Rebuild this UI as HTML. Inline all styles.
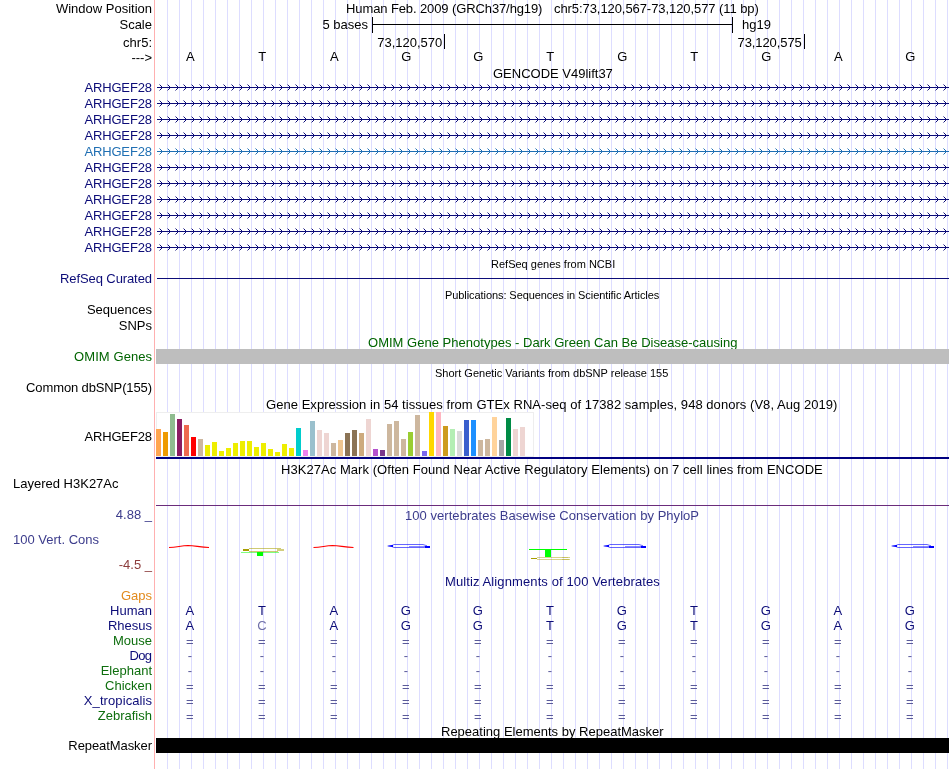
<!DOCTYPE html>
<html><head><meta charset="utf-8"><style>
html,body{margin:0;padding:0;background:#fff;overflow:hidden;width:950px;height:769px}
svg{display:block;will-change:transform;font-family:"Liberation Sans",sans-serif}
</style></head><body>
<svg width="950" height="769" viewBox="0 0 950 769" shape-rendering="crispEdges">
<defs><pattern id="chev0" x="159" y="84" width="8" height="16" patternUnits="userSpaceOnUse"><rect x="0" y="0" width="1" height="1" fill="#8A8ABE"/><rect x="1" y="1" width="1" height="1" fill="#0C0C78"/><rect x="2" y="2" width="1" height="3" fill="#0C0C78"/><rect x="1" y="5" width="1" height="1" fill="#0C0C78"/><rect x="0" y="6" width="1" height="1" fill="#8A8ABE"/></pattern><pattern id="chev1" x="159" y="84" width="8" height="16" patternUnits="userSpaceOnUse"><rect x="0" y="0" width="1" height="1" fill="#8FB7D9"/><rect x="1" y="1" width="1" height="1" fill="#1F6FB3"/><rect x="2" y="2" width="1" height="3" fill="#1F6FB3"/><rect x="1" y="5" width="1" height="1" fill="#1F6FB3"/><rect x="0" y="6" width="1" height="1" fill="#8FB7D9"/></pattern></defs>
<rect x="167" y="0" width="1" height="769" fill="#DDDDFF"/>
<rect x="179" y="0" width="1" height="769" fill="#DDDDFF"/>
<rect x="191" y="0" width="1" height="769" fill="#DDDDFF"/>
<rect x="203" y="0" width="1" height="769" fill="#DDDDFF"/>
<rect x="215" y="0" width="1" height="769" fill="#DDDDFF"/>
<rect x="227" y="0" width="1" height="769" fill="#DDDDFF"/>
<rect x="239" y="0" width="1" height="769" fill="#DDDDFF"/>
<rect x="251" y="0" width="1" height="769" fill="#DDDDFF"/>
<rect x="263" y="0" width="1" height="769" fill="#DDDDFF"/>
<rect x="275" y="0" width="1" height="769" fill="#DDDDFF"/>
<rect x="287" y="0" width="1" height="769" fill="#DDDDFF"/>
<rect x="299" y="0" width="1" height="769" fill="#DDDDFF"/>
<rect x="311" y="0" width="1" height="769" fill="#DDDDFF"/>
<rect x="323" y="0" width="1" height="769" fill="#DDDDFF"/>
<rect x="335" y="0" width="1" height="769" fill="#DDDDFF"/>
<rect x="347" y="0" width="1" height="769" fill="#DDDDFF"/>
<rect x="359" y="0" width="1" height="769" fill="#DDDDFF"/>
<rect x="371" y="0" width="1" height="769" fill="#DDDDFF"/>
<rect x="383" y="0" width="1" height="769" fill="#DDDDFF"/>
<rect x="395" y="0" width="1" height="769" fill="#DDDDFF"/>
<rect x="407" y="0" width="1" height="769" fill="#DDDDFF"/>
<rect x="419" y="0" width="1" height="769" fill="#DDDDFF"/>
<rect x="431" y="0" width="1" height="769" fill="#DDDDFF"/>
<rect x="443" y="0" width="1" height="769" fill="#DDDDFF"/>
<rect x="455" y="0" width="1" height="769" fill="#DDDDFF"/>
<rect x="467" y="0" width="1" height="769" fill="#DDDDFF"/>
<rect x="479" y="0" width="1" height="769" fill="#DDDDFF"/>
<rect x="491" y="0" width="1" height="769" fill="#DDDDFF"/>
<rect x="503" y="0" width="1" height="769" fill="#DDDDFF"/>
<rect x="515" y="0" width="1" height="769" fill="#DDDDFF"/>
<rect x="527" y="0" width="1" height="769" fill="#DDDDFF"/>
<rect x="539" y="0" width="1" height="769" fill="#DDDDFF"/>
<rect x="551" y="0" width="1" height="769" fill="#DDDDFF"/>
<rect x="563" y="0" width="1" height="769" fill="#DDDDFF"/>
<rect x="575" y="0" width="1" height="769" fill="#DDDDFF"/>
<rect x="587" y="0" width="1" height="769" fill="#DDDDFF"/>
<rect x="599" y="0" width="1" height="769" fill="#DDDDFF"/>
<rect x="611" y="0" width="1" height="769" fill="#DDDDFF"/>
<rect x="623" y="0" width="1" height="769" fill="#DDDDFF"/>
<rect x="635" y="0" width="1" height="769" fill="#DDDDFF"/>
<rect x="647" y="0" width="1" height="769" fill="#DDDDFF"/>
<rect x="659" y="0" width="1" height="769" fill="#DDDDFF"/>
<rect x="671" y="0" width="1" height="769" fill="#DDDDFF"/>
<rect x="683" y="0" width="1" height="769" fill="#DDDDFF"/>
<rect x="695" y="0" width="1" height="769" fill="#DDDDFF"/>
<rect x="707" y="0" width="1" height="769" fill="#DDDDFF"/>
<rect x="719" y="0" width="1" height="769" fill="#DDDDFF"/>
<rect x="731" y="0" width="1" height="769" fill="#DDDDFF"/>
<rect x="743" y="0" width="1" height="769" fill="#DDDDFF"/>
<rect x="755" y="0" width="1" height="769" fill="#DDDDFF"/>
<rect x="767" y="0" width="1" height="769" fill="#DDDDFF"/>
<rect x="779" y="0" width="1" height="769" fill="#DDDDFF"/>
<rect x="791" y="0" width="1" height="769" fill="#DDDDFF"/>
<rect x="803" y="0" width="1" height="769" fill="#DDDDFF"/>
<rect x="815" y="0" width="1" height="769" fill="#DDDDFF"/>
<rect x="827" y="0" width="1" height="769" fill="#DDDDFF"/>
<rect x="839" y="0" width="1" height="769" fill="#DDDDFF"/>
<rect x="851" y="0" width="1" height="769" fill="#DDDDFF"/>
<rect x="863" y="0" width="1" height="769" fill="#DDDDFF"/>
<rect x="875" y="0" width="1" height="769" fill="#DDDDFF"/>
<rect x="887" y="0" width="1" height="769" fill="#DDDDFF"/>
<rect x="899" y="0" width="1" height="769" fill="#DDDDFF"/>
<rect x="911" y="0" width="1" height="769" fill="#DDDDFF"/>
<rect x="923" y="0" width="1" height="769" fill="#DDDDFF"/>
<rect x="935" y="0" width="1" height="769" fill="#DDDDFF"/>
<rect x="947" y="0" width="1" height="769" fill="#DDDDFF"/>
<rect x="154" y="0" width="1" height="769" fill="#FFB0B0"/>
<text x="152" y="13" text-anchor="end" fill="#000" font-size="13">Window Position</text>
<text x="152" y="29" text-anchor="end" fill="#000" font-size="13">Scale</text>
<text x="152" y="47" text-anchor="end" fill="#000" font-size="13">chr5:</text>
<text x="152" y="62" text-anchor="end" fill="#000" font-size="13">---&gt;</text>
<text x="346" y="13" fill="#000" font-size="13" textLength="196.45" lengthAdjust="spacing">Human Feb. 2009 (GRCh37/hg19)</text>
<text x="554" y="13" fill="#000" font-size="13" textLength="204.80" lengthAdjust="spacing">chr5:73,120,567-73,120,577 (11 bp)</text>
<rect x="372" y="17" width="1" height="16" fill="#000"/>
<rect x="732" y="17" width="1" height="16" fill="#000"/>
<rect x="372" y="24" width="361" height="1" fill="#000"/>
<text x="368" y="29" text-anchor="end" fill="#000" font-size="13">5 bases</text>
<text x="742" y="29" text-anchor="start" fill="#000" font-size="13">hg19</text>
<rect x="444" y="34" width="1" height="15" fill="#000"/>
<rect x="804" y="34" width="1" height="15" fill="#000"/>
<text x="442.3" y="47" text-anchor="end" fill="#000" font-size="13">73,120,570</text>
<text x="801.8" y="47" text-anchor="end" fill="#000" font-size="13" textLength="64.3" lengthAdjust="spacing">73,120,575</text>
<text x="190.3" y="61" text-anchor="middle" fill="#000" font-size="13">A</text>
<text x="262.3" y="61" text-anchor="middle" fill="#000" font-size="13">T</text>
<text x="334.3" y="61" text-anchor="middle" fill="#000" font-size="13">A</text>
<text x="406.3" y="61" text-anchor="middle" fill="#000" font-size="13">G</text>
<text x="478.3" y="61" text-anchor="middle" fill="#000" font-size="13">G</text>
<text x="550.3" y="61" text-anchor="middle" fill="#000" font-size="13">T</text>
<text x="622.3" y="61" text-anchor="middle" fill="#000" font-size="13">G</text>
<text x="694.3" y="61" text-anchor="middle" fill="#000" font-size="13">T</text>
<text x="766.3" y="61" text-anchor="middle" fill="#000" font-size="13">G</text>
<text x="838.3" y="61" text-anchor="middle" fill="#000" font-size="13">A</text>
<text x="910.3" y="61" text-anchor="middle" fill="#000" font-size="13">G</text>
<text x="493" y="78" fill="#000" font-size="13" textLength="119.84" lengthAdjust="spacing">GENCODE V49lift37</text>
<text x="152" y="92" text-anchor="end" fill="#0C0C78" font-size="13" textLength="67.59" lengthAdjust="spacing">ARHGEF28</text>
<rect x="157" y="87" width="792" height="1" fill="#0C0C78"/>
<rect x="159" y="84" width="790" height="7" fill="url(#chev0)"/>
<text x="152" y="108" text-anchor="end" fill="#0C0C78" font-size="13" textLength="67.59" lengthAdjust="spacing">ARHGEF28</text>
<rect x="157" y="103" width="792" height="1" fill="#0C0C78"/>
<rect x="159" y="100" width="790" height="7" fill="url(#chev0)"/>
<text x="152" y="124" text-anchor="end" fill="#0C0C78" font-size="13" textLength="67.59" lengthAdjust="spacing">ARHGEF28</text>
<rect x="157" y="119" width="792" height="1" fill="#0C0C78"/>
<rect x="159" y="116" width="790" height="7" fill="url(#chev0)"/>
<text x="152" y="140" text-anchor="end" fill="#0C0C78" font-size="13" textLength="67.59" lengthAdjust="spacing">ARHGEF28</text>
<rect x="157" y="135" width="792" height="1" fill="#0C0C78"/>
<rect x="159" y="132" width="790" height="7" fill="url(#chev0)"/>
<text x="152" y="156" text-anchor="end" fill="#1F6FB3" font-size="13" textLength="67.59" lengthAdjust="spacing">ARHGEF28</text>
<rect x="157" y="151" width="792" height="1" fill="#1F6FB3"/>
<rect x="159" y="148" width="790" height="7" fill="url(#chev1)"/>
<text x="152" y="172" text-anchor="end" fill="#0C0C78" font-size="13" textLength="67.59" lengthAdjust="spacing">ARHGEF28</text>
<rect x="157" y="167" width="792" height="1" fill="#0C0C78"/>
<rect x="159" y="164" width="790" height="7" fill="url(#chev0)"/>
<text x="152" y="188" text-anchor="end" fill="#0C0C78" font-size="13" textLength="67.59" lengthAdjust="spacing">ARHGEF28</text>
<rect x="157" y="183" width="792" height="1" fill="#0C0C78"/>
<rect x="159" y="180" width="790" height="7" fill="url(#chev0)"/>
<text x="152" y="204" text-anchor="end" fill="#0C0C78" font-size="13" textLength="67.59" lengthAdjust="spacing">ARHGEF28</text>
<rect x="157" y="199" width="792" height="1" fill="#0C0C78"/>
<rect x="159" y="196" width="790" height="7" fill="url(#chev0)"/>
<text x="152" y="220" text-anchor="end" fill="#0C0C78" font-size="13" textLength="67.59" lengthAdjust="spacing">ARHGEF28</text>
<rect x="157" y="215" width="792" height="1" fill="#0C0C78"/>
<rect x="159" y="212" width="790" height="7" fill="url(#chev0)"/>
<text x="152" y="236" text-anchor="end" fill="#0C0C78" font-size="13" textLength="67.59" lengthAdjust="spacing">ARHGEF28</text>
<rect x="157" y="231" width="792" height="1" fill="#0C0C78"/>
<rect x="159" y="228" width="790" height="7" fill="url(#chev0)"/>
<text x="152" y="252" text-anchor="end" fill="#0C0C78" font-size="13" textLength="67.59" lengthAdjust="spacing">ARHGEF28</text>
<rect x="157" y="247" width="792" height="1" fill="#0C0C78"/>
<rect x="159" y="244" width="790" height="7" fill="url(#chev0)"/>
<text x="491" y="268" fill="#000" font-size="11" textLength="124.22" lengthAdjust="spacing">RefSeq genes from NCBI</text>
<text x="152" y="283" text-anchor="end" fill="#0C0C78" font-size="13" textLength="91.93" lengthAdjust="spacing">RefSeq Curated</text>
<rect x="157" y="278" width="792" height="1" fill="#0C0C78"/>
<text x="445" y="299" fill="#000" font-size="11" textLength="214.27" lengthAdjust="spacing">Publications: Sequences in Scientific Articles</text>
<text x="152" y="314" text-anchor="end" fill="#000" font-size="13">Sequences</text>
<text x="152" y="330" text-anchor="end" fill="#000" font-size="13">SNPs</text>
<text x="368" y="347" fill="#006400" font-size="13" textLength="369.42" lengthAdjust="spacing">OMIM Gene Phenotypes - Dark Green Can Be Disease-causing</text>
<text x="152" y="361" text-anchor="end" fill="#006400" font-size="13" textLength="77.90" lengthAdjust="spacing">OMIM Genes</text>
<rect x="156" y="349" width="793" height="15" fill="#BEBEBE"/>
<text x="435" y="377" fill="#000" font-size="11" textLength="233.27" lengthAdjust="spacing">Short Genetic Variants from dbSNP release 155</text>
<text x="152" y="392" text-anchor="end" fill="#000" font-size="13" textLength="125.89" lengthAdjust="spacing">Common dbSNP(155)</text>
<text x="266" y="409" fill="#000" font-size="13" textLength="571.35" lengthAdjust="spacing">Gene Expression in 54 tissues from GTEx RNA-seq of 17382 samples, 948 donors (V8, Aug 2019)</text>
<text x="152" y="441" text-anchor="end" fill="#000" font-size="13" textLength="67.59" lengthAdjust="spacing">ARHGEF28</text>
<rect x="156.5" y="412.5" width="377" height="44" fill="#fff" stroke="#EEEEEE" stroke-width="1"/>
<rect x="156" y="429" width="5" height="27" fill="#FFA54F"/>
<rect x="163" y="432" width="5" height="24" fill="#EE9A00"/>
<rect x="170" y="414" width="5" height="42" fill="#8FBC8F"/>
<rect x="177" y="419" width="5" height="37" fill="#8B1C62"/>
<rect x="184" y="425" width="5" height="31" fill="#EE6A50"/>
<rect x="191" y="437" width="5" height="19" fill="#FF0000"/>
<rect x="198" y="439" width="5" height="17" fill="#CDB79E"/>
<rect x="205" y="445" width="5" height="11" fill="#EEEE00"/>
<rect x="212" y="442" width="5" height="14" fill="#EEEE00"/>
<rect x="219" y="451" width="5" height="5" fill="#EEEE00"/>
<rect x="226" y="448" width="5" height="8" fill="#EEEE00"/>
<rect x="233" y="443" width="5" height="13" fill="#EEEE00"/>
<rect x="240" y="441" width="5" height="15" fill="#EEEE00"/>
<rect x="247" y="441" width="5" height="15" fill="#EEEE00"/>
<rect x="254" y="447" width="5" height="9" fill="#EEEE00"/>
<rect x="261" y="443" width="5" height="13" fill="#EEEE00"/>
<rect x="268" y="449" width="5" height="7" fill="#EEEE00"/>
<rect x="275" y="452" width="5" height="4" fill="#EEEE00"/>
<rect x="282" y="444" width="5" height="12" fill="#EEEE00"/>
<rect x="289" y="448" width="5" height="8" fill="#EEEE00"/>
<rect x="296" y="428" width="5" height="28" fill="#00CDCD"/>
<rect x="303" y="450" width="5" height="6" fill="#EE82EE"/>
<rect x="310" y="421" width="5" height="35" fill="#9AC0CD"/>
<rect x="317" y="430" width="5" height="26" fill="#EED5D2"/>
<rect x="324" y="433" width="5" height="23" fill="#EED5D2"/>
<rect x="331" y="443" width="5" height="13" fill="#CDB79E"/>
<rect x="338" y="440" width="5" height="16" fill="#EEC591"/>
<rect x="345" y="433" width="5" height="23" fill="#8B7355"/>
<rect x="352" y="430" width="5" height="26" fill="#8B7355"/>
<rect x="359" y="433" width="5" height="23" fill="#CDAA7D"/>
<rect x="366" y="419" width="5" height="37" fill="#EED5D2"/>
<rect x="373" y="449" width="5" height="7" fill="#B452CD"/>
<rect x="380" y="450" width="5" height="6" fill="#7A378B"/>
<rect x="387" y="424" width="5" height="32" fill="#CDB79E"/>
<rect x="394" y="421" width="5" height="35" fill="#CDB79E"/>
<rect x="401" y="439" width="5" height="17" fill="#CDB79E"/>
<rect x="408" y="432" width="5" height="24" fill="#9ACD32"/>
<rect x="415" y="415" width="5" height="41" fill="#CDB79E"/>
<rect x="422" y="451" width="5" height="5" fill="#7A67EE"/>
<rect x="429" y="412" width="5" height="44" fill="#FFD700"/>
<rect x="436" y="412" width="5" height="44" fill="#FFB6C1"/>
<rect x="443" y="426" width="5" height="30" fill="#CD9B1D"/>
<rect x="450" y="429" width="5" height="27" fill="#B4EEB4"/>
<rect x="457" y="431" width="5" height="25" fill="#D9D9D9"/>
<rect x="464" y="420" width="5" height="36" fill="#3A5FCD"/>
<rect x="471" y="420" width="5" height="36" fill="#1E90FF"/>
<rect x="478" y="440" width="5" height="16" fill="#CDB79E"/>
<rect x="485" y="439" width="5" height="17" fill="#CDB79E"/>
<rect x="492" y="417" width="5" height="39" fill="#FFD39B"/>
<rect x="499" y="440" width="5" height="16" fill="#A6A6A6"/>
<rect x="506" y="418" width="5" height="38" fill="#008B45"/>
<rect x="513" y="429" width="5" height="27" fill="#EED5D2"/>
<rect x="520" y="427" width="5" height="29" fill="#EED5D2"/>
<rect x="156" y="457" width="793" height="2" fill="#000080"/>
<text x="281" y="474" fill="#000" font-size="13" textLength="541.75" lengthAdjust="spacing">H3K27Ac Mark (Often Found Near Active Regulatory Elements) on 7 cell lines from ENCODE</text>
<text x="13" y="488" text-anchor="start" fill="#000" font-size="13">Layered H3K27Ac</text>
<rect x="156" y="505" width="793" height="1" fill="#6B2C7B"/>
<text x="405" y="520" fill="#3C3C8C" font-size="13" textLength="294.04" lengthAdjust="spacing">100 vertebrates Basewise Conservation by PhyloP</text>
<text x="152" y="519" text-anchor="end" fill="#3C3C8C" font-size="13">4.88 _</text>
<text x="13" y="544" text-anchor="start" fill="#3C3C8C" font-size="13">100 Vert. Cons</text>
<text x="152" y="569" text-anchor="end" fill="#8C3C3C" font-size="13">-4.5 _</text>
<path d="M169,547.5 C177,547.3 181,545.6 188,545.5 C195,545.6 200,547.3 209,547.5" stroke="#FF0000" stroke-width="1.1" fill="none" shape-rendering="geometricPrecision"/>
<path d="M313.5,547.5 C321.5,547.3 325.5,545.6 332.5,545.5 C339.5,545.6 344.5,547.3 353.5,547.5" stroke="#FF0000" stroke-width="1.1" fill="none" shape-rendering="geometricPrecision"/>
<path d="M387,546 C389,545.2 392,545 393,545 L393,547 C392,547 389,546.8 387,546 Z" fill="#0000FF" shape-rendering="geometricPrecision"/>
<path d="M392,545.5 L394,544.5 L423,544.5 L427,545.8" stroke="#0000FF" stroke-opacity="0.6" stroke-width="1" fill="none" shape-rendering="geometricPrecision"/>
<path d="M392,546.6 L394,547.5 L424,547.5" stroke="#0000FF" stroke-opacity="0.6" stroke-width="1" fill="none" shape-rendering="geometricPrecision"/>
<path d="M409,546.5 L424,546.5" stroke="#0000FF" stroke-opacity="0.45" stroke-width="1" fill="none" shape-rendering="geometricPrecision"/>
<path d="M424,546 L430,546 L430,548 L424,548 C425,547.5 425,546.5 424,546 Z" fill="#0000FF" shape-rendering="geometricPrecision"/>
<path d="M603,546 C605,545.2 608,545 609,545 L609,547 C608,547 605,546.8 603,546 Z" fill="#0000FF" shape-rendering="geometricPrecision"/>
<path d="M608,545.5 L610,544.5 L639,544.5 L643,545.8" stroke="#0000FF" stroke-opacity="0.6" stroke-width="1" fill="none" shape-rendering="geometricPrecision"/>
<path d="M608,546.6 L610,547.5 L640,547.5" stroke="#0000FF" stroke-opacity="0.6" stroke-width="1" fill="none" shape-rendering="geometricPrecision"/>
<path d="M625,546.5 L640,546.5" stroke="#0000FF" stroke-opacity="0.45" stroke-width="1" fill="none" shape-rendering="geometricPrecision"/>
<path d="M640,546 L646,546 L646,548 L640,548 C641,547.5 641,546.5 640,546 Z" fill="#0000FF" shape-rendering="geometricPrecision"/>
<path d="M891,546 C893,545.2 896,545 897,545 L897,547 C896,547 893,546.8 891,546 Z" fill="#0000FF" shape-rendering="geometricPrecision"/>
<path d="M896,545.5 L898,544.5 L927,544.5 L931,545.8" stroke="#0000FF" stroke-opacity="0.6" stroke-width="1" fill="none" shape-rendering="geometricPrecision"/>
<path d="M896,546.6 L898,547.5 L928,547.5" stroke="#0000FF" stroke-opacity="0.6" stroke-width="1" fill="none" shape-rendering="geometricPrecision"/>
<path d="M913,546.5 L928,546.5" stroke="#0000FF" stroke-opacity="0.45" stroke-width="1" fill="none" shape-rendering="geometricPrecision"/>
<path d="M928,546 L934,546 L934,548 L928,548 C929,547.5 929,546.5 928,546 Z" fill="#0000FF" shape-rendering="geometricPrecision"/>
<rect x="243" y="549" width="6" height="2" fill="#A89E00"/>
<rect x="249" y="548" width="32" height="1" fill="#A89E00" fill-opacity="0.55"/>
<rect x="249" y="551" width="29" height="1" fill="#A89E00" fill-opacity="0.55"/>
<rect x="277" y="549" width="7" height="2" fill="#A89E00" fill-opacity="0.5"/>
<rect x="241" y="552" width="38" height="1" fill="#00FF00" fill-opacity="0.5"/>
<rect x="257" y="552" width="6" height="4" fill="#00FF00"/>
<rect x="529" y="549" width="38" height="1" fill="#00FF00"/>
<rect x="545" y="550" width="6" height="7" fill="#00FF00"/>
<rect x="531" y="558" width="6" height="1" fill="#A89E00"/>
<rect x="537" y="557" width="33" height="1" fill="#A89E00" fill-opacity="0.45"/>
<rect x="537" y="559" width="33" height="1" fill="#A89E00" fill-opacity="0.45"/>
<rect x="562" y="557" width="6" height="1" fill="#A89E00" fill-opacity="0.3"/>
<rect x="562" y="559" width="7" height="1" fill="#A89E00" fill-opacity="0.35"/>
<text x="445" y="586" fill="#0C0C78" font-size="13" textLength="214.82" lengthAdjust="spacing">Multiz Alignments of 100 Vertebrates</text>
<text x="152" y="600" text-anchor="end" fill="#E28A1C" font-size="13">Gaps</text>
<text x="152" y="615" text-anchor="end" fill="#0C0C78" font-size="13">Human</text>
<text x="152" y="630" text-anchor="end" fill="#0C0C78" font-size="13">Rhesus</text>
<text x="152" y="645" text-anchor="end" fill="#0E6E0E" font-size="13">Mouse</text>
<text x="152" y="660" text-anchor="end" fill="#0C0C78" font-size="13" textLength="22.46" lengthAdjust="spacing">Dog</text>
<text x="152" y="675" text-anchor="end" fill="#0E6E0E" font-size="13">Elephant</text>
<text x="152" y="690" text-anchor="end" fill="#0E6E0E" font-size="13">Chicken</text>
<text x="152" y="705" text-anchor="end" fill="#0C0C78" font-size="13" textLength="68.20" lengthAdjust="spacing">X_tropicalis</text>
<text x="152" y="720" text-anchor="end" fill="#0E6E0E" font-size="13">Zebrafish</text>
<text x="189.9" y="615" text-anchor="middle" fill="#0C0C78" font-size="13">A</text>
<text x="189.9" y="630" text-anchor="middle" fill="#0C0C78" font-size="13">A</text>
<text x="189.9" y="646" text-anchor="middle" fill="#5A5A9A" font-size="13">=</text>
<text x="189.9" y="660" text-anchor="middle" fill="#5A5A9A" font-size="13">-</text>
<text x="189.9" y="675" text-anchor="middle" fill="#5A5A9A" font-size="13">-</text>
<text x="189.9" y="691" text-anchor="middle" fill="#5A5A9A" font-size="13">=</text>
<text x="189.9" y="706" text-anchor="middle" fill="#5A5A9A" font-size="13">=</text>
<text x="189.9" y="721" text-anchor="middle" fill="#5A5A9A" font-size="13">=</text>
<text x="261.9" y="615" text-anchor="middle" fill="#0C0C78" font-size="13">T</text>
<text x="261.9" y="630" text-anchor="middle" fill="#7070A8" font-size="13">C</text>
<text x="261.9" y="646" text-anchor="middle" fill="#5A5A9A" font-size="13">=</text>
<text x="261.9" y="660" text-anchor="middle" fill="#5A5A9A" font-size="13">-</text>
<text x="261.9" y="675" text-anchor="middle" fill="#5A5A9A" font-size="13">-</text>
<text x="261.9" y="691" text-anchor="middle" fill="#5A5A9A" font-size="13">=</text>
<text x="261.9" y="706" text-anchor="middle" fill="#5A5A9A" font-size="13">=</text>
<text x="261.9" y="721" text-anchor="middle" fill="#5A5A9A" font-size="13">=</text>
<text x="333.9" y="615" text-anchor="middle" fill="#0C0C78" font-size="13">A</text>
<text x="333.9" y="630" text-anchor="middle" fill="#0C0C78" font-size="13">A</text>
<text x="333.9" y="646" text-anchor="middle" fill="#5A5A9A" font-size="13">=</text>
<text x="333.9" y="660" text-anchor="middle" fill="#5A5A9A" font-size="13">-</text>
<text x="333.9" y="675" text-anchor="middle" fill="#5A5A9A" font-size="13">-</text>
<text x="333.9" y="691" text-anchor="middle" fill="#5A5A9A" font-size="13">=</text>
<text x="333.9" y="706" text-anchor="middle" fill="#5A5A9A" font-size="13">=</text>
<text x="333.9" y="721" text-anchor="middle" fill="#5A5A9A" font-size="13">=</text>
<text x="405.9" y="615" text-anchor="middle" fill="#0C0C78" font-size="13">G</text>
<text x="405.9" y="630" text-anchor="middle" fill="#0C0C78" font-size="13">G</text>
<text x="405.9" y="646" text-anchor="middle" fill="#5A5A9A" font-size="13">=</text>
<text x="405.9" y="660" text-anchor="middle" fill="#5A5A9A" font-size="13">-</text>
<text x="405.9" y="675" text-anchor="middle" fill="#5A5A9A" font-size="13">-</text>
<text x="405.9" y="691" text-anchor="middle" fill="#5A5A9A" font-size="13">=</text>
<text x="405.9" y="706" text-anchor="middle" fill="#5A5A9A" font-size="13">=</text>
<text x="405.9" y="721" text-anchor="middle" fill="#5A5A9A" font-size="13">=</text>
<text x="477.9" y="615" text-anchor="middle" fill="#0C0C78" font-size="13">G</text>
<text x="477.9" y="630" text-anchor="middle" fill="#0C0C78" font-size="13">G</text>
<text x="477.9" y="646" text-anchor="middle" fill="#5A5A9A" font-size="13">=</text>
<text x="477.9" y="660" text-anchor="middle" fill="#5A5A9A" font-size="13">-</text>
<text x="477.9" y="675" text-anchor="middle" fill="#5A5A9A" font-size="13">-</text>
<text x="477.9" y="691" text-anchor="middle" fill="#5A5A9A" font-size="13">=</text>
<text x="477.9" y="706" text-anchor="middle" fill="#5A5A9A" font-size="13">=</text>
<text x="477.9" y="721" text-anchor="middle" fill="#5A5A9A" font-size="13">=</text>
<text x="549.9" y="615" text-anchor="middle" fill="#0C0C78" font-size="13">T</text>
<text x="549.9" y="630" text-anchor="middle" fill="#0C0C78" font-size="13">T</text>
<text x="549.9" y="646" text-anchor="middle" fill="#5A5A9A" font-size="13">=</text>
<text x="549.9" y="660" text-anchor="middle" fill="#5A5A9A" font-size="13">-</text>
<text x="549.9" y="675" text-anchor="middle" fill="#5A5A9A" font-size="13">-</text>
<text x="549.9" y="691" text-anchor="middle" fill="#5A5A9A" font-size="13">=</text>
<text x="549.9" y="706" text-anchor="middle" fill="#5A5A9A" font-size="13">=</text>
<text x="549.9" y="721" text-anchor="middle" fill="#5A5A9A" font-size="13">=</text>
<text x="621.9" y="615" text-anchor="middle" fill="#0C0C78" font-size="13">G</text>
<text x="621.9" y="630" text-anchor="middle" fill="#0C0C78" font-size="13">G</text>
<text x="621.9" y="646" text-anchor="middle" fill="#5A5A9A" font-size="13">=</text>
<text x="621.9" y="660" text-anchor="middle" fill="#5A5A9A" font-size="13">-</text>
<text x="621.9" y="675" text-anchor="middle" fill="#5A5A9A" font-size="13">-</text>
<text x="621.9" y="691" text-anchor="middle" fill="#5A5A9A" font-size="13">=</text>
<text x="621.9" y="706" text-anchor="middle" fill="#5A5A9A" font-size="13">=</text>
<text x="621.9" y="721" text-anchor="middle" fill="#5A5A9A" font-size="13">=</text>
<text x="693.9" y="615" text-anchor="middle" fill="#0C0C78" font-size="13">T</text>
<text x="693.9" y="630" text-anchor="middle" fill="#0C0C78" font-size="13">T</text>
<text x="693.9" y="646" text-anchor="middle" fill="#5A5A9A" font-size="13">=</text>
<text x="693.9" y="660" text-anchor="middle" fill="#5A5A9A" font-size="13">-</text>
<text x="693.9" y="675" text-anchor="middle" fill="#5A5A9A" font-size="13">-</text>
<text x="693.9" y="691" text-anchor="middle" fill="#5A5A9A" font-size="13">=</text>
<text x="693.9" y="706" text-anchor="middle" fill="#5A5A9A" font-size="13">=</text>
<text x="693.9" y="721" text-anchor="middle" fill="#5A5A9A" font-size="13">=</text>
<text x="765.9" y="615" text-anchor="middle" fill="#0C0C78" font-size="13">G</text>
<text x="765.9" y="630" text-anchor="middle" fill="#0C0C78" font-size="13">G</text>
<text x="765.9" y="646" text-anchor="middle" fill="#5A5A9A" font-size="13">=</text>
<text x="765.9" y="660" text-anchor="middle" fill="#5A5A9A" font-size="13">-</text>
<text x="765.9" y="675" text-anchor="middle" fill="#5A5A9A" font-size="13">-</text>
<text x="765.9" y="691" text-anchor="middle" fill="#5A5A9A" font-size="13">=</text>
<text x="765.9" y="706" text-anchor="middle" fill="#5A5A9A" font-size="13">=</text>
<text x="765.9" y="721" text-anchor="middle" fill="#5A5A9A" font-size="13">=</text>
<text x="837.9" y="615" text-anchor="middle" fill="#0C0C78" font-size="13">A</text>
<text x="837.9" y="630" text-anchor="middle" fill="#0C0C78" font-size="13">A</text>
<text x="837.9" y="646" text-anchor="middle" fill="#5A5A9A" font-size="13">=</text>
<text x="837.9" y="660" text-anchor="middle" fill="#5A5A9A" font-size="13">-</text>
<text x="837.9" y="675" text-anchor="middle" fill="#5A5A9A" font-size="13">-</text>
<text x="837.9" y="691" text-anchor="middle" fill="#5A5A9A" font-size="13">=</text>
<text x="837.9" y="706" text-anchor="middle" fill="#5A5A9A" font-size="13">=</text>
<text x="837.9" y="721" text-anchor="middle" fill="#5A5A9A" font-size="13">=</text>
<text x="909.9" y="615" text-anchor="middle" fill="#0C0C78" font-size="13">G</text>
<text x="909.9" y="630" text-anchor="middle" fill="#0C0C78" font-size="13">G</text>
<text x="909.9" y="646" text-anchor="middle" fill="#5A5A9A" font-size="13">=</text>
<text x="909.9" y="660" text-anchor="middle" fill="#5A5A9A" font-size="13">-</text>
<text x="909.9" y="675" text-anchor="middle" fill="#5A5A9A" font-size="13">-</text>
<text x="909.9" y="691" text-anchor="middle" fill="#5A5A9A" font-size="13">=</text>
<text x="909.9" y="706" text-anchor="middle" fill="#5A5A9A" font-size="13">=</text>
<text x="909.9" y="721" text-anchor="middle" fill="#5A5A9A" font-size="13">=</text>
<text x="441" y="736" fill="#000" font-size="13" textLength="222.66" lengthAdjust="spacing">Repeating Elements by RepeatMasker</text>
<text x="152" y="750" text-anchor="end" fill="#000" font-size="13" textLength="83.65" lengthAdjust="spacing">RepeatMasker</text>
<rect x="156" y="738" width="793" height="15" fill="#000"/>
</svg>
</body></html>
